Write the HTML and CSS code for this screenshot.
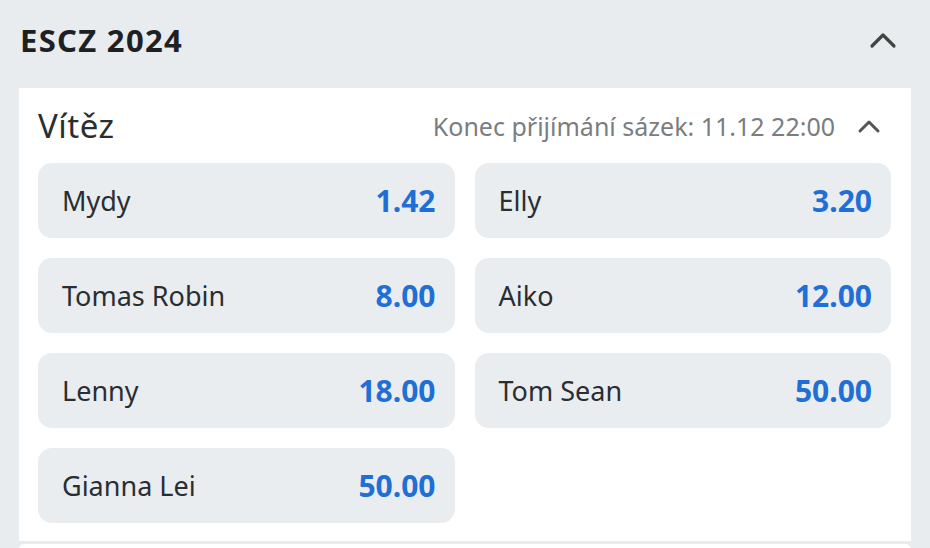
FILE: index.html
```html
<!DOCTYPE html>
<html lang="cs">
<head>
    <meta charset="UTF-8">
    <meta name="viewport" content="width=device-width, initial-scale=1.0">
    <title>ESCZ 2024</title>
    <link rel="stylesheet" href="styles.css">
</head>
<body>
    <div class="event">
        <header class="event-head">
            <h1>ESCZ 2024</h1>
            <svg class="chevron big" viewBox="0 0 28 18"><path d="M3 15 L14 4 L25 15" /></svg>
        </header>

        <!-- Market -->
        <div class="market">
            <div class="market-head">
                <h2>Vítěz</h2>
                <div class="deadline">
                    <span>Konec přijímání sázek: 11.12 22:00</span>
                    <svg class="chevron" viewBox="0 0 24 16"><path d="M3 13 L12 4 L21 13" /></svg>
                </div>
            </div>
            <div class="odds-grid">
                <button class="odd"><span class="name">Mydy</span><span class="value">1.42</span></button>
                <button class="odd"><span class="name">Elly</span><span class="value">3.20</span></button>
                <button class="odd"><span class="name">Tomas Robin</span><span class="value">8.00</span></button>
                <button class="odd"><span class="name">Aiko</span><span class="value">12.00</span></button>
                <button class="odd"><span class="name">Lenny</span><span class="value">18.00</span></button>
                <button class="odd"><span class="name">Tom Sean</span><span class="value">50.00</span></button>
                <button class="odd"><span class="name">Gianna Lei</span><span class="value">50.00</span></button>
            </div>
        </div>
        <div class="market next"></div>
    </div>
</body>
</html>
```

FILE: styles.css
```css
body {
    font-family: "Noto Sans", "Open Sans", sans-serif;
    background-color: #e8ecef;
    margin: 0;
    padding: 0;
    overflow: hidden;
}
.event {
    padding: 0 19px;
}
.event-head {
    display: flex;
    align-items: center;
    justify-content: space-between;
    height: 88px;
    padding-left: 1px;
    padding-right: 14px;
}
.event-head h1 {
    margin: 0;
    font-size: 31px;
    font-weight: 700;
    color: #1d2124;
    letter-spacing: 1.3px;
    padding-bottom: 8px;
}
.chevron {
    fill: none;
    stroke: #555;
    stroke-width: 3.2;
    stroke-linecap: round;
    stroke-linejoin: round;
}
.chevron.big {
    width: 28px;
    height: 18px;
    stroke: #444;
    margin-bottom: 8px;
}
.market {
    background: white;
    padding: 0 20px 18px 19px;
}
.market-head {
    display: flex;
    align-items: center;
    justify-content: space-between;
    height: 75px;
}
.market-head h2 {
    margin: 0;
    font-size: 33px;
    font-weight: 400;
    color: #2a2e31;
    letter-spacing: 0.5px;
}
.deadline {
    display: flex;
    align-items: center;
    gap: 22px;
    color: #7a7d80;
    font-size: 25px;
    margin-right: 10px;
}
.deadline .chevron {
    width: 24px;
    height: 16px;
    stroke: #555;
    stroke-width: 3;
}
.odds-grid {
    display: grid;
    grid-template-columns: 1fr 1fr;
    gap: 20px 20px;
}
.odd {
    display: flex;
    align-items: center;
    justify-content: space-between;
    height: 75px;
    padding: 0 19px 0 24px;
    border: none;
    border-radius: 14px;
    background-color: #e9edf0;
    font-family: inherit;
    cursor: pointer;
}
.odd .name {
    font-size: 27px;
    color: #2a2e31;
}
.odd .value {
    font-size: 30px;
    font-weight: 700;
    color: #1f6fd6;
}
.market.next {
    margin-top: 3px;
    height: 5px;
    padding: 0;
    border-radius: 10px 10px 0 0;
}
```
